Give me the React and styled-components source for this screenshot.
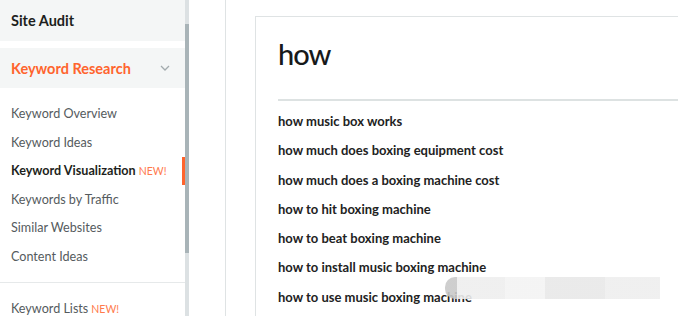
import React from 'react'
import styled, { createGlobalStyle } from 'styled-components'

const keywords = [
  'how music box works',
  'how much does boxing equipment cost',
  'how much does a boxing machine cost',
  'how to hit boxing machine',
  'how to beat boxing machine',
  'how to install music boxing machine',
  'how to use music boxing machine',
]

const tools = [
  { label: 'Keyword Overview' },
  { label: 'Keyword Ideas' },
  { label: 'Keyword Visualization', active: true, isNew: true },
  { label: 'Keywords by Traffic' },
  { label: 'Similar Websites' },
  { label: 'Content Ideas' },
]

export default function App() {
  return (
    <>
      <GlobalStyle />
      <Page>
        <Sidebar>
          <Nav>
            <SectionBar>Site Audit</SectionBar>
            <SectionBar open>
              Keyword Research
              <Chevron viewBox="0 0 10 6">
                <polyline points="1,1 5,5 9,1" />
              </Chevron>
            </SectionBar>
            <SubList>
              {tools.map(t => (
                <SubItem key={t.label} active={t.active}>
                  {t.label}
                  {t.isNew && <NewTag>NEW!</NewTag>}
                </SubItem>
              ))}
            </SubList>
            <SubList bordered>
              <SubItem>
                Keyword Lists<NewTag>NEW!</NewTag>
              </SubItem>
            </SubList>
          </Nav>
          <ScrollTrack>
            <ScrollThumb />
          </ScrollTrack>
        </Sidebar>
        <Main>
          <Card>
            <Query>how</Query>
            <Rule />
            <Results>
              {keywords.map(k => (
                <Result key={k}>{k}</Result>
              ))}
            </Results>
          </Card>
        </Main>
        <Smudge />
      </Page>
    </>
  )
}

const GlobalStyle = createGlobalStyle`
  *, *::before, *::after { box-sizing: border-box; }
  body {
    margin: 0;
    background: #fff;
    font-family: Lato, "Open Sans", "Liberation Sans", sans-serif;
  }
`

const Page = styled.div`
  position: relative;
  display: flex;
  height: 316px;
  overflow: hidden;
`

const Sidebar = styled.aside`
  display: flex;
  width: 189px;
  flex-shrink: 0;
`

const Nav = styled.nav`
  width: 185px;
  display: flex;
  flex-direction: column;
  overflow: hidden;
`

const SectionBar = styled.div`
  flex-shrink: 0;
  display: flex;
  align-items: center;
  justify-content: space-between;
  height: ${p => (p.open ? '40px' : '41px')};
  margin-bottom: ${p => (p.open ? '0' : '7px')};
  padding: 0 11px;
  background: #f4f6f6;
  font-size: 14.5px;
  font-weight: 700;
  color: ${p => (p.open ? '#ff642d' : '#1d1f20')};
`

const Chevron = styled.svg`
  width: 10px;
  height: 6px;
  margin-right: 4px;
  fill: none;
  stroke: #a3abae;
  stroke-width: 1.3;
`

const SubList = styled.ul`
  flex-shrink: 0;
  list-style: none;
  margin: 0;
  padding: 12px 0 11px;
  border-top: ${p => (p.bordered ? '1px solid #e6e9ea' : 'none')};
`

const SubItem = styled.li`
  position: relative;
  height: 28.5px;
  line-height: 28.5px;
  padding-left: 11px;
  font-size: 12.6px;
  color: ${p => (p.active ? '#1d1f20' : '#555b5e')};
  font-weight: ${p => (p.active ? 700 : 400)};
  white-space: nowrap;

  &::after {
    content: '';
    display: ${p => (p.active ? 'block' : 'none')};
    position: absolute;
    right: 0;
    top: 0;
    width: 3px;
    height: 28px;
    background: #ff642d;
  }
`

const NewTag = styled.span`
  margin-left: 3px;
  font-size: 10.5px;
  font-weight: 400;
  color: #ff7a4d;
`

const ScrollTrack = styled.div`
  width: 4px;
  height: 316px;
  background: #dce1e3;
  display: flex;
  flex-direction: column;
`

const ScrollThumb = styled.div`
  margin-top: 24px;
  height: 229px;
  background: #a9b4b8;
`

const Main = styled.main`
  flex: 1;
  margin-left: 36px;
  border-left: 1px solid #dfe3e4;
  padding: 16px 0 0 29px;
`

const Card = styled.section`
  width: 423px;
  height: 100%;
  border-top: 1px solid #dfe3e4;
  border-left: 1px solid #dfe3e4;
  padding-left: 22px;
`

const Query = styled.h1`
  margin: 0;
  padding-top: 17px;
  height: 82px;
  font-size: 29px;
  line-height: 40px;
  font-weight: 500;
  letter-spacing: -1px;
  color: #17191a;
`

const Rule = styled.div`
  height: 2px;
  background: #dde2e2;
`

const Results = styled.ul`
  list-style: none;
  margin: 0;
  padding: 6px 0 0;
`

const Result = styled.li`
  height: 29.3px;
  line-height: 29.3px;
  font-size: 13px;
  font-weight: 700;
  color: #222;
  white-space: nowrap;
`

const Smudge = styled.div`
  position: absolute;
  left: 445px;
  top: 277px;
  width: 215px;
  height: 22px;
  border-radius: 10px 0 0 10px;
  background: linear-gradient(90deg, #c9c9c9 0 12px, #eeeeee 12px 60px, #f3f3f3 60px 100px, #e8e8e8 100px 160px, #eeeeee 160px);
  opacity: 0.9;
`
